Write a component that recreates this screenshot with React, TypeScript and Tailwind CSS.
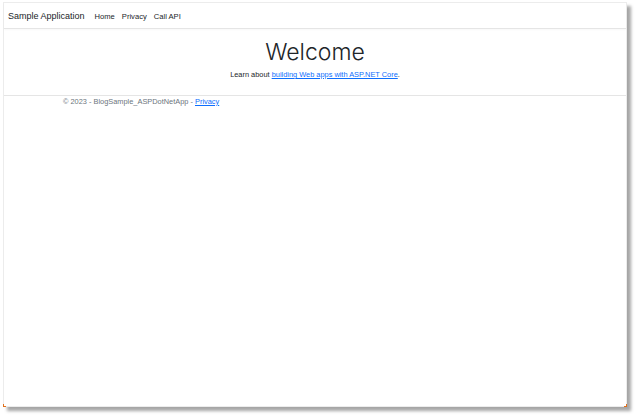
export default function App() {
  return (
    <div className="w-[636px] h-[416px] bg-white pl-[3px] pt-[2px]" style={{ fontFamily: '"Liberation Sans", Arial, sans-serif' }}>
      <div className="relative w-[624px] h-[405px] bg-white border border-[#ececec] shadow-[4px_4px_3px_rgba(0,0,0,0.35)] flex flex-col">
        {/* Navbar */}
        <nav className="h-[26px] border-b border-[#e5e5e5] flex items-center pl-[4px] pt-[2px] shadow-[0_1px_2px_rgba(0,0,0,0.03)]">
          <span className="text-[9px] text-[#212529] mr-[10px]">Sample Application</span>
          <div className="flex gap-[7px] text-[7.6px] text-[#212529]">
            <span>Home</span>
            <span>Privacy</span>
            <span>Call API</span>
          </div>
        </nav>

        {/* Main */}
        <main className="flex flex-col items-center pt-[9px] h-[66px]">
          <h1 className="text-[23px] font-light text-[#212529] leading-[28px]" style={{ fontFamily: 'Inter, sans-serif' }}>
            Welcome
          </h1>
          <p className="text-[7.4px] leading-[10px] text-[#212529] mt-[4px]">
            Learn about{' '}
            <a className="text-[#0d6efd] underline">building Web apps with ASP.NET Core</a>.
          </p>
        </main>

        {/* Footer */}
        <footer className="border-t border-[#e5e5e5] pl-[59px] pt-[1px] text-[7.4px] leading-[9px] text-[#6c757d]">
          © 2023 - BlogSample_ASPDotNetApp - <a className="text-[#0d6efd] underline">Privacy</a>
        </footer>

        {/* corner marks */}
        <div className="absolute left-[-1px] bottom-[-1px] w-[3px] h-[3px] border-l border-b border-[#e0701c]" />
        <div className="absolute right-[-1px] bottom-[-1px] w-[3px] h-[3px] border-r border-b border-[#e0701c]" />
      </div>
    </div>
  );
}
